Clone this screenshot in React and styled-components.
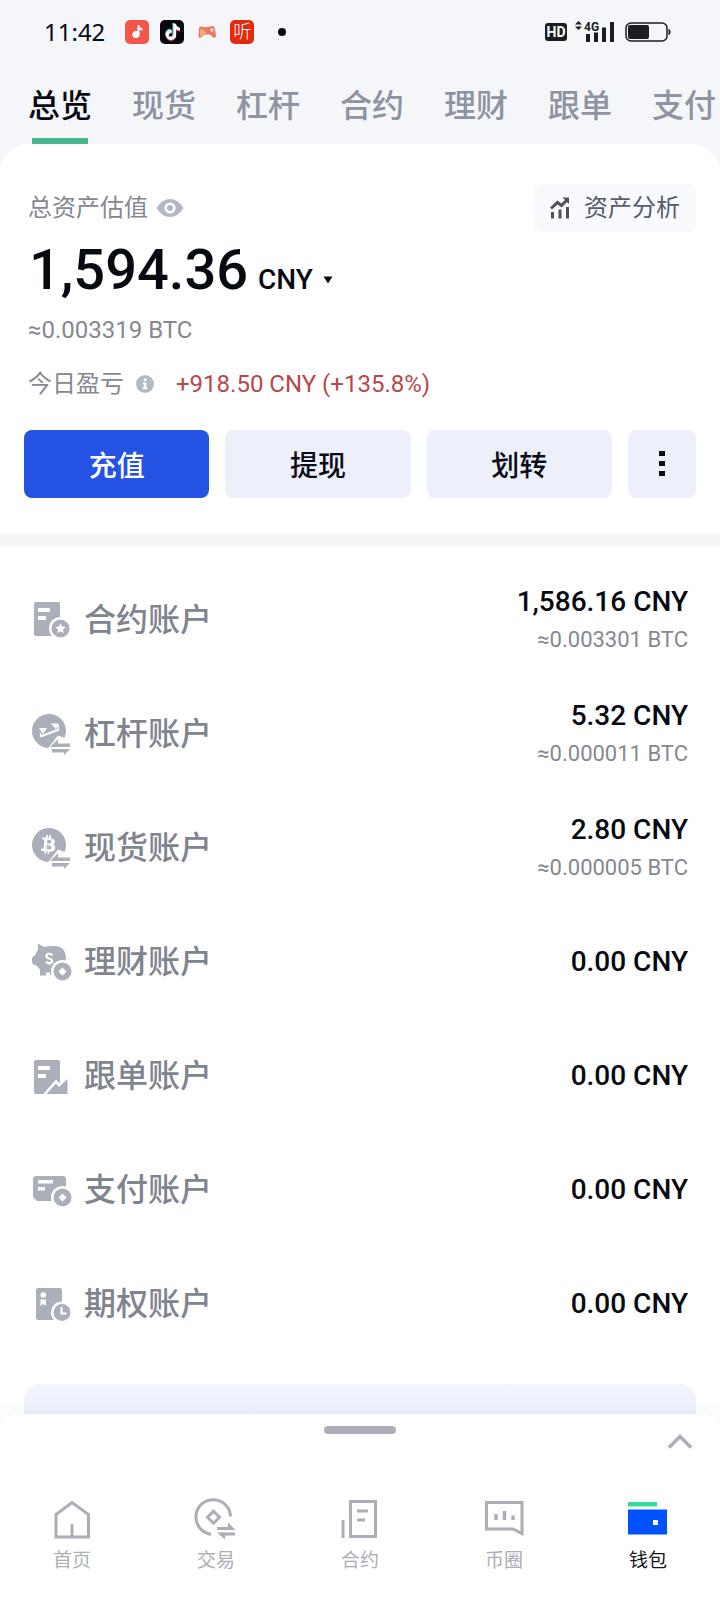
import {useState} from "react";
import {createGlobalStyle, styled} from "styled-components";
import {FaBtc, FaTiktok} from "react-icons/fa";

const tabs = ["总览", "现货", "杠杆", "合约", "理财", "跟单", "支付"];

const accounts = [
    {icon: "contract", name: "合约账户", value: "1,586.16 CNY", btc: "≈0.003301 BTC"},
    {icon: "margin", name: "杠杆账户", value: "5.32 CNY", btc: "≈0.000011 BTC"},
    {icon: "spot", name: "现货账户", value: "2.80 CNY", btc: "≈0.000005 BTC"},
    {icon: "earn", name: "理财账户", value: "0.00 CNY"},
    {icon: "copy", name: "跟单账户", value: "0.00 CNY"},
    {icon: "pay", name: "支付账户", value: "0.00 CNY"},
    {icon: "options", name: "期权账户", value: "0.00 CNY"},
];

const navItems = [
    {icon: "home", label: "首页"},
    {icon: "trade", label: "交易"},
    {icon: "futures", label: "合约"},
    {icon: "circle", label: "币圈"},
    {icon: "wallet", label: "钱包"},
];

const Swap = () => (
    <>
        <path d="M17 36.5 L28 22.5 L44 28 L44 42 L20 42 Z" fill="#fff"/>
        <path d="M20 34 L28 26 V30.5 H40 V34 Z"/>
        <path d="M22 36 H40 L34 42 V39.5 H22 Z"/>
    </>
);

const Coin = ({cy}) => (
    <>
        <circle cx="32.5" cy={cy} r="11.5" fill="#fff"/>
        <circle cx="32.5" cy={cy} r="9"/>
        <path d={`M32.5 ${cy - 4} l4 4 l-4 4 l-4 -4 Z`} fill="#fff"/>
    </>
);

const accountIcons = {
    contract: (
        <>
            <rect x="4" y="3" width="26" height="34" rx="2"/>
            <path d="M8 9h12v4h-12z M8 17h8v4h-8z" fill="#fff"/>
            <circle cx="30.5" cy="29.5" r="11.5" fill="#fff"/>
            <circle cx="30.5" cy="29.5" r="9"/>
            <path d="M30.5 24.2l1.6 3.3 3.6.5-2.6 2.5.6 3.6-3.2-1.7-3.2 1.7.6-3.6-2.6-2.5 3.6-.5z" fill="#fff"/>
        </>
    ),
    margin: (
        <>
            <circle cx="19" cy="18" r="17"/>
            <path d="M9 15h8l-4 6z M21 10.5h8l-3 6z" fill="#fff"/>
            <path d="M10.5 23.5L29 16.5" fill="none" stroke="#fff" strokeWidth="2.4"/>
            <path d="M10.5 20v4 M28.5 12v5.5" fill="none" stroke="#fff" strokeWidth="1.2"/>
            <Swap/>
        </>
    ),
    spot: (
        <>
            <circle cx="19" cy="18" r="17"/>
            <g transform="rotate(6 18.5 17.5)"><FaBtc x="9" y="8" size="19" color="#fff"/></g>
            <Swap/>
        </>
    ),
    earn: (
        <>
            <path d="M8 2.5 L14 6 Q18 5 25 5 C32 5 36 10 36 17 L34 29 L27 31 V34 H20 V31.500 H16 V34.5 H10 V28.5 L6 24 H4.5 Q2 23 2 21 V17.500 Q2 15.5 5 14.5 Q6 11 8 9 Z"/>
            <path d="M22.5 14.2 Q20.8 12.3 18.3 12.9 Q15.6 13.7 16.8 16.2 Q17.5 17.2 19.6 17.8 Q22.8 18.8 21.8 21.2 Q20 23.6 16 21" fill="none" stroke="#fff" strokeWidth="2.2"/>
            <Coin cy={30.5}/>
        </>
    ),
    copy: (
        <>
            <rect x="4" y="5" width="26" height="34" rx="2"/>
            <path d="M8 11h12v4h-12z M8 19h8v4h-8z" fill="#fff"/>
            <path d="M12.5 40 L26 24.5 L29 28 L40 18 V40 Z" fill="#fff"/>
            <path d="M16.5 39 L26 28.5 L29 32 L37.5 24 V39 Z"/>
        </>
    ),
    pay: (
        <>
            <path d="M5 7H34L36 9V32H7L3 28V9Z"/>
            <path d="M8 11h15v3.5h-15z M8 18h7v3.5h-7z" fill="#fff"/>
            <Coin cy={28.5}/>
        </>
    ),
    options: (
        <>
            <rect x="6" y="5" width="26" height="32" rx="2"/>
            <circle cx="13.3" cy="12" r="2.8" fill="#fff"/>
            <path d="M10.5 16.5h5.5v6.5l-2.7-2-2.8 2z" fill="#fff"/>
            <circle cx="32" cy="29.5" r="11" fill="#fff"/>
            <circle cx="32" cy="29.5" r="8.5"/>
            <path d="M31.5 24v6.5h5" fill="none" stroke="#fff" strokeWidth="2"/>
        </>
    ),
};

const navIcons = {
    home: <path d="M6 41V18.5L22 6.5L38.5 18.5V41Z M22 28v12"/>,
    trade: (
        <>
            <path d="M36.5 20.5A17.3 17.3 0 1 0 17 38.2"/>
            <path d="M19.5 15.2l6 6l-6 6l-6-6z"/>
            <path d="M23 32.5h13 M26 38h15"/>
            <path d="M34 26.5l7.5 7.500h-7.500z M31 43.5l-8-7h8z" fill="#abaeb6" stroke="none"/>
        </>
    ),
    futures: <path d="M12.5 5.5h25v35h-25z M5 24v18 M19 15h11 M19 24h8"/>,
    circle: (
        <>
            <path d="M4.5 6.5h35.5v31l-9-4.5h-26.5z"/>
            <path d="M14 18v6 M22.5 15v9 M31 19.5v4.5" strokeWidth="3.5"/>
        </>
    ),
    wallet: (
        <>
            <path d="M2 6h29v4.5H2z" fill="#36d99a" stroke="none"/>
            <path d="M2 13.5h39v25H2z" fill="#0051ff" stroke="none"/>
            <path d="M27 24h5v5h-5z" fill="#fff" stroke="none"/>
        </>
    ),
};

const StatusBar = () => (
    <StatusContainer>
        <StatusGroup>
            <Time>11:42</Time>
            <AppBadges>
                <AppBadge $color="#f4564a">
                    <svg width="24" height="24" viewBox="0 0 24 24" fill="#fff">
                        <circle cx="11" cy="14.5" r="3.6"/>
                        <path d="M12.5 5.5l1.6-.5q.5 3 3.4 3.3v2.2q-2 0-3-1v5h-2z"/>
                    </svg>
                </AppBadge>
                <AppBadge $color="#07070d">
                    <svg width="24" height="24" viewBox="0 0 24 24">
                        <FaTiktok x="4" y="3" size="16" color="#3fe6e0"/>
                        <FaTiktok x="5" y="5" size="16" color="#f0365a"/>
                        <FaTiktok x="5" y="4" size="16" color="#fff"/>
                    </svg>
                </AppBadge>
                <AppBadge $color="transparent">
                    <svg width="24" height="24" viewBox="0 0 24 24">
                        <path d="M5.500 6.5Q12 8 17.5 6Q19.5 6 20 9L21 16Q21 18.500 18 17.500L15 14.5H9.5L6 17.500Q3.500 18.500 3.500 16L4 8.5Q4 6.5 5.500 6.500Z" fill="#e8776a"/>
                        <path d="M5.5 8l6 4.5L5 17z" fill="#f8b25c"/>
                        <circle cx="17" cy="10" r="2" fill="#f6c3b4"/>
                    </svg>
                </AppBadge>
                <AppBadge $color="#e22b0e">听</AppBadge>
            </AppBadges>
            <Dot/>
        </StatusGroup>
        <StatusGroup>
            <HdBadge>HD</HdBadge>
            <svg width="42" height="24" viewBox="0 0 42 24" fill="#1c1d20">
                <path d="M0 4.500l3.500-3.500 3.500 3.500z M0 6.500h7l-3.500 3.500z"/>
                <text x="9" y="11" fontSize="12" fontWeight="700" fontFamily="Roboto, sans-serif">4G</text>
                <path d="M11 14h4v8h-4z M19 12.5h4v9.500h-4z M27 7.5h4v14.500h-4z M35 2h4v20h-4z"/>
            </svg>
            <svg width="46" height="24" viewBox="0 0 46 24" fill="#1c1d20">
                <rect x="1" y="3" width="41" height="18" rx="5" fill="none" stroke="#1c1d20" strokeWidth="1.5"/>
                <rect x="3" y="5" width="21" height="14" rx="2"/>
                <path d="M43.500 9q2 0 2 3t-2 3z"/>
            </svg>
        </StatusGroup>
    </StatusContainer>
);

export default function App() {
    const [activeTab, setActiveTab] = useState("总览");

    return (
        <>
            <GlobalStyle/>
            <Page>
                <StatusBar/>
                <Tabs role="tablist">
                    {tabs.map((tab) => (
                        <Tab
                            key={tab}
                            type="button"
                            role="tab"
                            aria-selected={tab === activeTab}
                            $active={tab === activeTab}
                            onClick={() => setActiveTab(tab)}
                        >
                            {tab}
                        </Tab>
                    ))}
                </Tabs>
                <Panel>
                    <Summary>
                        <TitleRow>
                            <Label>
                                总资产估值
                                <svg width="28" height="20" viewBox="0 0 28 20">
                                    <path d="M0.5 10Q6 1 14 1T27.5 10Q22 19 14 19T0.5 10Z" fill="#b4b8c2"/>
                                    <circle cx="14" cy="10" r="4.3" fill="none" stroke="#fff" strokeWidth="2.6"/>
                                </svg>
                            </Label>
                            <AnalysisButton type="button">
                                <svg width="20" height="24" viewBox="0 0 20 24" fill="#4b515d">
                                    <path d="M1 12.5L7.5 6.500L11.5 9.5L17 4" fill="none" stroke="#4b515d" strokeWidth="3"/>
                                    <path d="M12.5 1.5H19V8z M1 16h3v6.5H1z M8.5 13.5h3v9h-3z M16 11h3v11.5h-3z"/>
                                </svg>
                                资产分析
                            </AnalysisButton>
                        </TitleRow>
                        <Total>
                            <TotalValue>1,594.36</TotalValue>
                            <Currency>
                                <select aria-label="CNY" defaultValue="CNY">
                                    <option>CNY</option>
                                </select>
                                <svg width="10" height="8" viewBox="0 0 10 8"><path d="M0.5 0.5h9L5 7.5z" fill="#080a12"/></svg>
                            </Currency>
                        </Total>
                        <Btc>≈0.003319 BTC</Btc>
                        <ProfitRow>
                            今日盈亏
                            <svg width="18" height="18" viewBox="0 0 18 18">
                                <circle cx="9" cy="9" r="9" fill="#b4bac4"/>
                                <path d="M7.8 3.5h2.6v2.4H7.8z M6.8 7.5h3.600v5h1v1.800H6.600v-1.800h1.200V9.200h-1z" fill="#fff"/>
                            </svg>
                            <Profit>+918.50 CNY (+135.8%)</Profit>
                        </ProfitRow>
                        <Actions>
                            <ActionButton type="button" $primary>充值</ActionButton>
                            <ActionButton type="button">提现</ActionButton>
                            <ActionButton type="button">划转</ActionButton>
                            <MoreButton type="button" aria-label="更多">
                                <svg width="6" height="26" viewBox="0 0 6 26"><path d="M0 0h6v5H0z M0 10h6v5H0z M0 20h6v5H0z" fill="#0a0c18"/></svg>
                            </MoreButton>
                        </Actions>
                    </Summary>
                    <Accounts>
                        {accounts.map((account) => (
                            <li key={account.name}>
                                <AccountLink href="#">
                                    <svg width="44" height="44" viewBox="0 0 44 44" fill="#abafb9">
                                        <g transform="translate(0 1)">{accountIcons[account.icon]}</g>
                                    </svg>
                                    <AccountName>{account.name}</AccountName>
                                    <Amounts>
                                        <p>{account.value}</p>
                                        {account.btc && <small>{account.btc}</small>}
                                    </Amounts>
                                </AccountLink>
                            </li>
                        ))}
                    </Accounts>
                    <Banner/>
                </Panel>
                <Dock>
                    <Handle/>
                    <Expand type="button" aria-label="展开">
                        <svg width="26" height="18" viewBox="0 0 26 18"><path d="M2 13.5L13 2.5L24 13.5" fill="none" stroke="#abaeb6" strokeWidth="3.5"/></svg>
                    </Expand>
                    <BottomNav>
                        {navItems.map((item) => (
                            <NavLink key={item.label} href="#" $active={item.icon === "wallet"}>
                                <svg width="44" height="44" viewBox="0 0 44 44" fill="none" stroke="#abaeb6" strokeWidth="3">
                                    {navIcons[item.icon]}
                                </svg>
                                {item.label}
                            </NavLink>
                        ))}
                    </BottomNav>
                </Dock>
            </Page>
        </>
    );
}

const GlobalStyle = createGlobalStyle`
  * {
    box-sizing: border-box;
    margin: 0;
  }

  body {
    background-color: #f4f6fa;
    font-family: Roboto, "Noto Sans CJK SC", sans-serif;
    color: #080a12;
  }

  button, select {
    border: none;
    padding: 0;
    font: inherit;
    color: inherit;
    cursor: pointer;
  }

  a {
    color: inherit;
    text-decoration: none;
  }

  svg {
    flex-shrink: 0;
  }
`

const Page = styled.div`
  min-height: 100vh;
  display: flex;
  flex-direction: column;
`

const StatusContainer = styled.header`
  height: 64px;
  padding-inline: 44px 49px;
  display: flex;
  align-items: center;
  justify-content: space-between;
`

const StatusGroup = styled.div`
  display: flex;
  align-items: center;
  gap: 8px;
`

const Time = styled.span`
  font-family: "Noto Sans", sans-serif;
  font-size: 24px;
  line-height: 32px;
`

const AppBadges = styled.div`
  display: flex;
  gap: 11px;
  margin-left: 12px;
`

const AppBadge = styled.span`
  width: 24px;
  height: 24px;
  display: flex;
  align-items: center;
  justify-content: center;
  border-radius: 5px;
  background-color: ${(props) => props.$color};
  color: #fff;
  font-size: 18px;
  font-weight: 300;
  line-height: 24px;
`

const Dot = styled.span`
  width: 8px;
  height: 8px;
  margin-left: 16px;
  border-radius: 50%;
  background-color: #080a12;
`

const HdBadge = styled.span`
  width: 22px;
  height: 18px;
  border-radius: 3px;
  background-color: #1c1d20;
  color: #fff;
  font-size: 14px;
  font-weight: 700;
  line-height: 18px;
  text-align: center;
`

const Tabs = styled.div`
  height: 80px;
  padding-left: 28px;
  display: flex;
  gap: 40px;
  overflow: hidden;
`

const Tab = styled.button`
  position: relative;
  flex-shrink: 0;
  background: none;
  color: ${(props) => props.$active ? "#080a12" : "#8e93a1"};
  font-size: 32px;
  font-weight: 500;
  line-height: 80px;
  padding-top: 2px;

  &::after {
    content: "";
    display: ${(props) => props.$active ? "block" : "none"};
    position: absolute;
    bottom: 0;
    left: 4px;
    right: 4px;
    height: 6px;
    background-color: #48b58d;
  }
`

const Panel = styled.main`
  flex: 1;
  display: flex;
  flex-direction: column;
  border-radius: 28px 28px 0 0;
  background-color: #fff;
`

const Summary = styled.section`
  padding: 40px 24px 36px;
  border-bottom: 12px solid #f3f4f6;
`

const TitleRow = styled.div`
  display: flex;
  align-items: center;
  justify-content: space-between;
  padding-left: 4px;
`

const Label = styled.div`
  display: flex;
  align-items: center;
  gap: 8px;
  color: #85888f;
  font-size: 24px;
  line-height: 48px;
`

const AnalysisButton = styled.button`
  display: flex;
  align-items: center;
  gap: 14px;
  height: 48px;
  padding-inline: 16px;
  border-radius: 8px;
  background-color: #f9fafd;
  color: #565c68;
  font-size: 24px;
  line-height: 48px;
`

const Total = styled.div`
  display: flex;
  align-items: baseline;
  gap: 10px;
  padding-top: 2px;
  padding-left: 5px;
  font-weight: 500;
  line-height: 72px;
`

const TotalValue = styled.p`
  font-size: 56px;
`

const Currency = styled.div`
  display: flex;
  align-items: center;
  gap: 10px;
  font-size: 28px;
  line-height: 36px;

  > select {
    appearance: none;
    background: none;
  }
`

const Btc = styled.p`
  padding-left: 4px;
  color: #85888e;
  font-size: 24px;
  line-height: 48px;
`

const ProfitRow = styled.div`
  display: flex;
  align-items: center;
  gap: 12px;
  padding-block: 6px 22px;
  padding-left: 4px;
  color: #85888f;
  font-size: 24px;
  line-height: 48px;
`

const Profit = styled.span`
  margin-left: 10px;
  color: #b8474c;
`

const Actions = styled.div`
  display: flex;
  gap: 16px;
`

const ActionButton = styled.button`
  flex: 1;
  height: 68px;
  border-radius: 8px;
  background-color: ${(props) => props.$primary ? "#2453e4" : "#edf0fa"};
  color: ${(props) => props.$primary ? "#fff" : "#0a0c18"};
  font-size: 28px;
  font-weight: 500;
`

const MoreButton = styled(ActionButton)`
  flex: 0 0 68px;
  display: flex;
  align-items: center;
  justify-content: center;
`

const Accounts = styled.ul`
  padding: 17px 32px 23px 30px;
  list-style: none;
`

const AccountLink = styled.a`
  height: 114px;
  display: flex;
  align-items: center;
`

const AccountName = styled.span`
  flex: 1;
  margin-left: 10px;
  color: #80848e;
  font-size: 32px;
  font-weight: 500;
  line-height: 40px;
`

const Amounts = styled.div`
  text-align: right;

  > p {
    font-size: 28px;
    font-weight: 500;
    line-height: 40px;
  }

  > small {
    display: block;
    color: #85888e;
    font-size: 22px;
    line-height: 36px;
  }
`

const Banner = styled.div`
  flex: 1;
  min-height: 46px;
  margin-inline: 24px;
  border-radius: 16px 16px 0 0;
  background: linear-gradient(#f0f5fe, #ebedfb);
`

const Dock = styled.footer`
  position: sticky;
  bottom: 0;
  height: 186px;
  margin-top: -16px;
  padding-top: 12px;
  border-radius: 16px 16px 0 0;
  background-color: #fff;
  box-shadow: 0 0 24px rgba(60, 80, 150, 0.06);
`

const Handle = styled.div`
  width: 72px;
  height: 8px;
  margin-inline: auto;
  border-radius: 4px;
  background-color: #abaeba;
`

const Expand = styled.button`
  display: block;
  height: 18px;
  margin-left: auto;
  margin-right: 27px;
  background: none;
  line-height: 0;
`

const BottomNav = styled.nav`
  display: grid;
  grid-template-columns: repeat(5, 1fr);
  margin-top: 44px;
`

const NavLink = styled.a`
  display: flex;
  flex-direction: column;
  align-items: center;
  gap: 5px;
  color: ${(props) => props.$active ? "#14161c" : "#abaeb6"};
  font-size: 19px;
  line-height: 32px;
`
